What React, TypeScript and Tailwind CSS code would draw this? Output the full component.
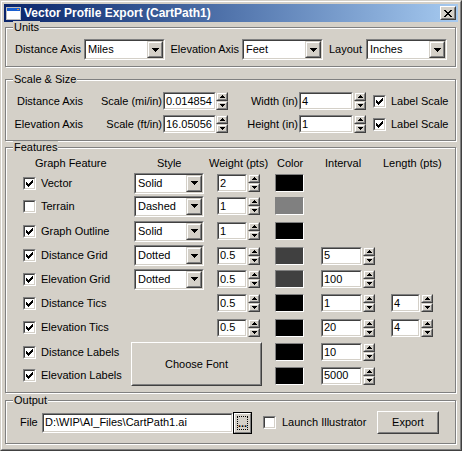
import type { ReactNode } from 'react';

type BoxProps = { className?: string; children?: ReactNode };

function Sunken({ className = '', children }: BoxProps) {
  return (
    <div className={`border border-t-[#808080] border-l-[#808080] border-b-white border-r-white ${className}`}>
      <div className="w-full h-full flex items-center bg-white border border-t-[#404040] border-l-[#404040] border-b-[#d4d0c8] border-r-[#d4d0c8] overflow-hidden">
        {children}
      </div>
    </div>
  );
}

function Button({ className = '', children }: BoxProps) {
  return (
    <div className={`border border-t-white border-l-white border-b-[#404040] border-r-[#404040] ${className}`}>
      <div className="w-full h-full flex items-center justify-center bg-[#d4d0c8] border border-t-[#d4d0c8] border-l-[#d4d0c8] border-b-[#808080] border-r-[#808080]">
        {children}
      </div>
    </div>
  );
}

function ArrowBtn({ className = '', children }: BoxProps) {
  return (
    <div className={`border border-t-[#d4d0c8] border-l-[#d4d0c8] border-b-[#404040] border-r-[#404040] ${className}`}>
      <div className="w-full h-full flex items-center justify-center bg-[#d4d0c8] border border-t-white border-l-white border-b-[#808080] border-r-[#808080]">
        {children}
      </div>
    </div>
  );
}

const DownArrow = () => (
  <svg width="7" height="4" viewBox="0 0 7 4" shapeRendering="crispEdges">
    <path d="M0 0h7v1h-1v1h-1v1h-1v1h-1v-1h-1v-1h-1v-1h-1z" fill="#000" />
  </svg>
);

const SpinUp = () => (
  <svg width="5" height="3" viewBox="0 0 5 3" shapeRendering="crispEdges">
    <path d="M2 0h1v1h1v1h1v1h-5v-1h1v-1h1z" fill="#000" />
  </svg>
);

const SpinDown = () => (
  <svg width="5" height="3" viewBox="0 0 5 3" shapeRendering="crispEdges">
    <path d="M0 0h5v1h-1v1h-1v1h-1v-1h-1v-1h-1z" fill="#000" />
  </svg>
);

function Combo({ value, className = '' }: { value: string; className?: string }) {
  return (
    <Sunken className={`h-[21px] shrink-0 ${className}`}>
      <span className="flex-1 pl-[2px] leading-none whitespace-nowrap">{value}</span>
      <ArrowBtn className="w-[16px] h-full shrink-0">
        <DownArrow />
      </ArrowBtn>
    </Sunken>
  );
}

function Field({ value, className = '' }: { value: string; className?: string }) {
  return (
    <Sunken className={`h-[18px] shrink-0 ${className}`}>
      <span className="pl-[1px] leading-none whitespace-nowrap">{value}</span>
    </Sunken>
  );
}

function Spin() {
  return (
    <div className="w-[12px] h-[18px] flex flex-col shrink-0">
      <ArrowBtn className="h-[9px]">
        <SpinUp />
      </ArrowBtn>
      <ArrowBtn className="h-[9px]">
        <SpinDown />
      </ArrowBtn>
    </div>
  );
}

function Check({ checked }: { checked: boolean }) {
  return (
    <Sunken className="w-[13px] h-[13px] shrink-0">
      {checked && (
        <svg width="7" height="7" viewBox="0 0 7 7" className="ml-[1px]" shapeRendering="crispEdges">
          {[2, 3, 4, 3, 2, 1, 0].map((y, x) => (
            <rect key={x} x={x} y={y} width="1" height="3" fill="#000" />
          ))}
        </svg>
      )}
    </Sunken>
  );
}

function Group({ label, className = '', children }: BoxProps & { label: string }) {
  return (
    <div className={`relative ml-[1px] w-[451px] shrink-0 border border-[#808080] shadow-[inset_1px_1px_0_#fff,1px_1px_0_#fff] ${className}`}>
      <span className="absolute -top-[7px] left-[7px] px-[1px] bg-[#d4d0c8] leading-[13px]">{label}</span>
      {children}
    </div>
  );
}

const features = [
  { name: 'Vector', checked: true, style: 'Solid', weight: '2', swatch: 'bg-black' },
  { name: 'Terrain', checked: false, style: 'Dashed', weight: '1', swatch: 'bg-[#808080]' },
  { name: 'Graph Outline', checked: true, style: 'Solid', weight: '1', swatch: 'bg-black' },
  { name: 'Distance Grid', checked: true, style: 'Dotted', weight: '0.5', swatch: 'bg-[#404040]', interval: '5' },
  { name: 'Elevation Grid', checked: true, style: 'Dotted', weight: '0.5', swatch: 'bg-[#404040]', interval: '100' },
  { name: 'Distance Tics', checked: true, weight: '0.5', swatch: 'bg-black', interval: '1', length: '4' },
  { name: 'Elevation Tics', checked: true, weight: '0.5', swatch: 'bg-black', interval: '20', length: '4' },
  { name: 'Distance Labels', checked: true, swatch: 'bg-black', interval: '10', font: true },
  { name: 'Elevation Labels', checked: true, swatch: 'bg-black', interval: '5000', skip: true },
];

export default function App() {
  return (
    <div className="w-[462px] h-[451px] bg-[#d4d0c8] border border-t-[#d4d0c8] border-l-[#d4d0c8] border-b-[#404040] border-r-[#404040] font-['Liberation_Sans',Arial,sans-serif] text-[11px] text-black select-none">
      <div className="h-full flex flex-col p-[2px] border border-t-white border-l-white border-b-[#808080] border-r-[#808080]">
        {/* Title bar */}
        <div className="h-[18px] shrink-0 flex items-center bg-linear-to-r from-[#0a246a] to-[#a6caf0]">
          <svg width="15" height="13" viewBox="0 0 15 13" className="ml-[2px]" shapeRendering="crispEdges">
            <rect x="0" y="0" width="15" height="13" fill="#c0c0c0" />
            <rect x="1" y="1" width="13" height="11" fill="#fff" />
            <rect x="1" y="1" width="13" height="3" fill="#1a5fd0" />
            <rect x="11" y="2" width="2" height="1" fill="#e88b2b" />
          </svg>
          <span className="ml-[3px] text-[12px] font-bold text-white leading-none whitespace-nowrap">
            Vector Profile Export (CartPath1)
          </span>
          <Button className="ml-auto mr-[2px] w-[16px] h-[14px]">
            <svg width="8" height="7" viewBox="0 0 8 7" shapeRendering="crispEdges">
              <path
                d="M0 0h2v1h-2zM6 0h2v1h-2zM1 1h2v1h-2zM5 1h2v1h-2zM2 2h4v1h-4zM3 3h2v1h-2zM2 4h4v1h-4zM1 5h2v1h-2zM5 5h2v1h-2zM0 6h2v1h-2zM6 6h2v1h-2z"
                fill="#000"
              />
            </svg>
          </Button>
        </div>

        {/* Units */}
        <Group label="Units" className="mt-[5px] h-[40px]">
          <div className="mt-[11px] h-[21px] flex items-center">
            <span className="w-[78px] pr-[3px] text-right whitespace-nowrap">Distance Axis</span>
            <Combo value="Miles" className="w-[81px]" />
            <span className="w-[77px] pr-[3px] text-right whitespace-nowrap">Elevation Axis</span>
            <Combo value="Feet" className="w-[81px]" />
            <span className="w-[43px] pr-[4px] text-right">Layout</span>
            <Combo value="Inches" className="w-[81px]" />
          </div>
        </Group>

        {/* Scale & Size */}
        <Group label="Scale & Size" className="mt-[12px] h-[62px]">
          <div className="mt-[12px] flex flex-col gap-[5px]">
            {[
              { axis: 'Distance Axis', scale: 'Scale (mi/in)', sv: '0.014854', dim: 'Width (in)', dv: '4' },
              { axis: 'Elevation Axis', scale: 'Scale (ft/in)', sv: '16.05056', dim: 'Height (in)', dv: '1' },
            ].map((r) => (
              <div key={r.axis} className="h-[18px] flex items-center">
                <span className="w-[78px] pr-[1px] text-right whitespace-nowrap">{r.axis}</span>
                <span className="w-[79px] pr-[1px] text-right whitespace-nowrap">{r.scale}</span>
                <Field value={r.sv} className="w-[53px]" />
                <Spin />
                <span className="w-[71px] pr-[1px] text-right whitespace-nowrap">{r.dim}</span>
                <Field value={r.dv} className="w-[54px]" />
                <div className="ml-[1px]">
                  <Spin />
                </div>
                <div className="ml-[7px]">
                  <Check checked />
                </div>
                <span className="ml-[5px] whitespace-nowrap">Label Scale</span>
              </div>
            ))}
          </div>
        </Group>

        {/* Features */}
        <Group label="Features" className="mt-[6px] h-[246px]">
          <div className="mt-[7px] h-[17px] flex items-center whitespace-nowrap">
            <span className="w-[29px]" />
            <span className="w-[122px]">Graph Feature</span>
            <span className="w-[52px]">Style</span>
            <span className="w-[68px]">Weight (pts)</span>
            <span className="w-[48px]">Color</span>
            <span className="w-[58px]">Interval</span>
            <span>Length (pts)</span>
          </div>
          <div className="grid grid-cols-[128px_83px_58px_46px_70px_1fr] grid-rows-[22px_24px_26px_23px_24px_24px_25px_24px_23px]">
            {features.map((f) => (
              <div key={f.name} className="contents">
                <div className="flex items-center pl-[17px]">
                  <Check checked={f.checked} />
                  <span className="ml-[5px] whitespace-nowrap">{f.name}</span>
                </div>
                {f.font ? (
                  <div className="col-span-2 row-span-2 -ml-[3px] mt-[2px] w-[131px] h-[44px]">
                    <Button className="w-full h-full">
                      <span>Choose Font</span>
                    </Button>
                  </div>
                ) : f.skip ? null : (
                  <>
                    <div className="flex items-center">{f.style && <Combo value={f.style} className="w-[70px]" />}</div>
                    <div className="flex items-center">
                      {f.weight && (
                        <>
                          <Field value={f.weight} className="w-[30px]" />
                          <div className="ml-[1px]">
                            <Spin />
                          </div>
                        </>
                      )}
                    </div>
                  </>
                )}
                <div className="flex items-center">
                  <div className={`w-[29px] h-[18px] border border-t-[#808080] border-l-[#808080] border-b-white border-r-white ${f.swatch}`} />
                </div>
                <div className="flex items-center">
                  {f.interval && (
                    <>
                      <Field value={f.interval} className="w-[41px]" />
                      <div className="ml-[1px]">
                        <Spin />
                      </div>
                    </>
                  )}
                </div>
                <div className="flex items-center">
                  {f.length && (
                    <>
                      <Field value={f.length} className="w-[29px]" />
                      <div className="ml-[1px]">
                        <Spin />
                      </div>
                    </>
                  )}
                </div>
              </div>
            ))}
          </div>
        </Group>

        {/* Output */}
        <Group label="Output" className="mt-[7px] h-[44px]">
          <div className="mt-[10px] h-[23px] flex items-center">
            <span className="w-[36px] pl-[14px]">File</span>
            <Sunken className="w-[191px] h-[20px]">
              <span className="pl-[1px] leading-none whitespace-nowrap">{'D:\\WIP\\AI_Files\\CartPath1.ai'}</span>
            </Sunken>
            <div className="w-[19px] h-[22px] border border-black">
              <div className="w-full h-full p-[2px] bg-[#d4d0c8] border border-t-white border-l-white border-b-[#808080] border-r-[#808080]">
                <div className="w-full h-full flex items-end justify-center border border-dotted border-black">
                  <span className="font-bold leading-none">...</span>
                </div>
              </div>
            </div>
            <div className="ml-[11px]">
              <Check checked={false} />
            </div>
            <span className="ml-[6px] w-[95px] whitespace-nowrap">Launch Illustrator</span>
            <Button className="w-[62px] h-[23px]">
              <span>Export</span>
            </Button>
          </div>
        </Group>
      </div>
    </div>
  );
}
